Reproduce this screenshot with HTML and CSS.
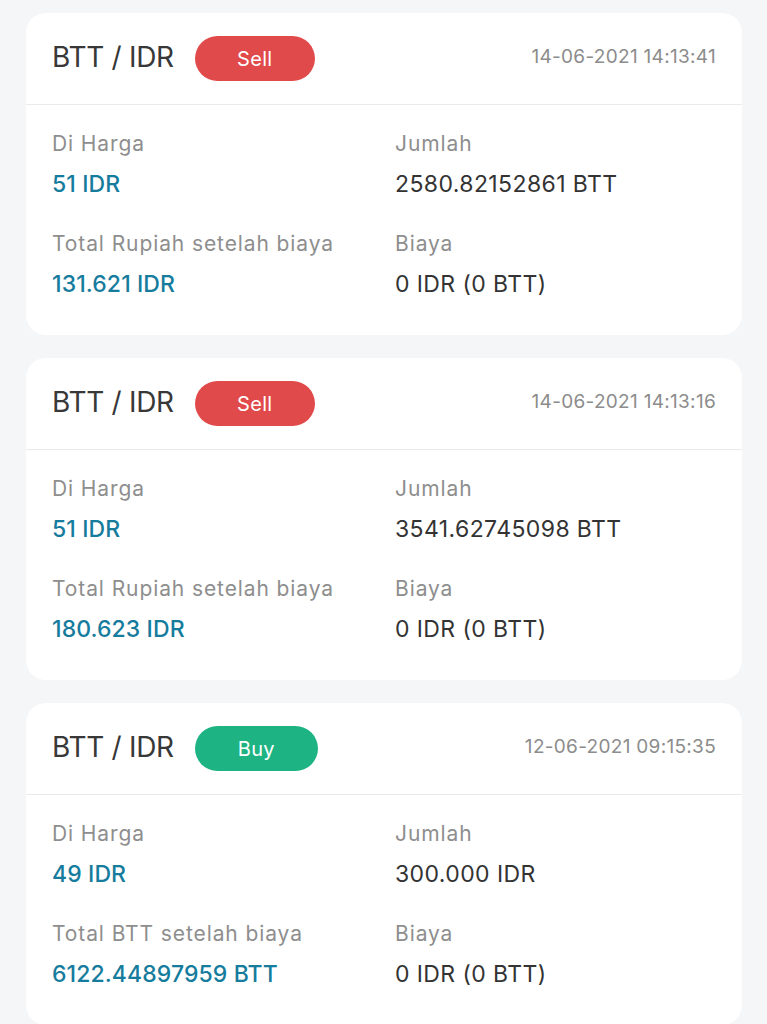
FILE: index.html
```html
<!DOCTYPE html>
<html lang="id">
<head>
    <meta charset="UTF-8">
    <meta name="viewport" content="width=device-width, initial-scale=1.0">
    <title>Riwayat Transaksi</title>
    <link rel="stylesheet" href="styles.css">
</head>
<body>
    <div class="list">
        <div class="card">
            <div class="card-head">
                <span class="pair">BTT / IDR</span>
                <span class="badge sell">Sell</span>
                <span class="date">14-06-2021 14:13:41</span>
            </div>
            <div class="card-body">
                <div class="field">
                    <div class="label">Di Harga</div>
                    <div class="value blue">51 IDR</div>
                </div>
                <div class="field">
                    <div class="label">Jumlah</div>
                    <div class="value">2580.82152861 BTT</div>
                </div>
                <div class="field">
                    <div class="label">Total Rupiah setelah biaya</div>
                    <div class="value blue">131.621 IDR</div>
                </div>
                <div class="field">
                    <div class="label">Biaya</div>
                    <div class="value">0 IDR (0 BTT)</div>
                </div>
            </div>
        </div>

        <div class="card">
            <div class="card-head">
                <span class="pair">BTT / IDR</span>
                <span class="badge sell">Sell</span>
                <span class="date">14-06-2021 14:13:16</span>
            </div>
            <div class="card-body">
                <div class="field">
                    <div class="label">Di Harga</div>
                    <div class="value blue">51 IDR</div>
                </div>
                <div class="field">
                    <div class="label">Jumlah</div>
                    <div class="value">3541.62745098 BTT</div>
                </div>
                <div class="field">
                    <div class="label">Total Rupiah setelah biaya</div>
                    <div class="value blue">180.623 IDR</div>
                </div>
                <div class="field">
                    <div class="label">Biaya</div>
                    <div class="value">0 IDR (0 BTT)</div>
                </div>
            </div>
        </div>

        <div class="card">
            <div class="card-head">
                <span class="pair">BTT / IDR</span>
                <span class="badge buy">Buy</span>
                <span class="date">12-06-2021 09:15:35</span>
            </div>
            <div class="card-body">
                <div class="field">
                    <div class="label">Di Harga</div>
                    <div class="value blue">49 IDR</div>
                </div>
                <div class="field">
                    <div class="label">Jumlah</div>
                    <div class="value">300.000 IDR</div>
                </div>
                <div class="field">
                    <div class="label">Total BTT setelah biaya</div>
                    <div class="value blue">6122.44897959 BTT</div>
                </div>
                <div class="field">
                    <div class="label">Biaya</div>
                    <div class="value">0 IDR (0 BTT)</div>
                </div>
            </div>
        </div>
    </div>
</body>
</html>
```

FILE: styles.css
```css
body {
    font-family: Inter, "Noto Sans", sans-serif;
    margin: 0;
    padding: 0;
    background: #f5f6f8;
    color: #333;
}
.list {
    display: flex;
    flex-direction: column;
    gap: 23px;
    padding: 13px 25px 0 26px;
}
.card {
    background: #fff;
    border-radius: 20px;
}
.card-head {
    display: flex;
    align-items: center;
    height: 91px;
    padding: 0 26px;
    border-bottom: 1px solid #e9eaec;
}
.pair {
    font-size: 28px;
    color: #383838;
    letter-spacing: -0.3px;
    padding-bottom: 4px;
}
.badge {
    margin-left: 21px;
    width: 120px;
    height: 45px;
    border-radius: 23px;
    display: flex;
    align-items: center;
    justify-content: center;
    color: #fff;
    font-size: 20px;
    letter-spacing: 0.3px;
}
.sell {
    background: #e14a4b;
}
.buy {
    background: #1eb383;
    width: 123px;
}
.date {
    margin-left: auto;
    font-size: 19px;
    letter-spacing: 0.3px;
    color: #8c8c8c;
    padding-bottom: 5px;
}
.card-body {
    display: grid;
    grid-template-columns: 1fr 1fr;
    column-gap: 22px;
    row-gap: 30px;
    padding: 24px 26px 36px;
}
.label {
    font-size: 21px;
    letter-spacing: 0.9px;
    line-height: 30px;
    color: #8e8e8e;
}
.value {
    font-size: 23px;
    letter-spacing: 0.4px;
    line-height: 30px;
    margin-top: 10px;
    color: #333;
}
.blue {
    color: #167c9d;
    font-weight: 500;
    letter-spacing: 0.1px;
}
```
